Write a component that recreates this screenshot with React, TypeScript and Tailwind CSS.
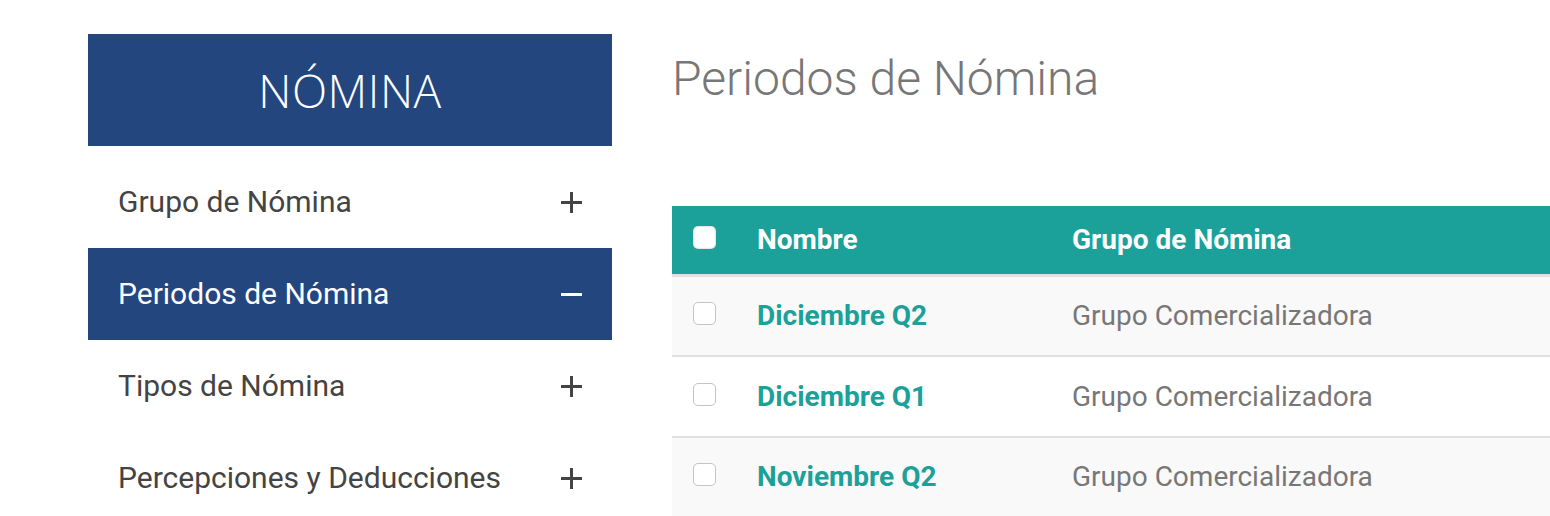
import React from "react";

const menu = [
  { label: "Grupo de Nómina", active: false },
  { label: "Periodos de Nómina", active: true },
  { label: "Tipos de Nómina", active: false },
  { label: "Percepciones y Deducciones", active: false },
];

const rows = [
  { name: "Diciembre Q2", group: "Grupo Comercializadora", h: "h-[80px]" },
  { name: "Diciembre Q1", group: "Grupo Comercializadora", h: "h-[81px]" },
  { name: "Noviembre Q2", group: "Grupo Comercializadora", h: "h-[80px]" },
];

function Toggle({ open }: { open: boolean }) {
  return (
    <span className="relative w-[21px] h-[21px] flex items-center justify-center">
      <span className={`absolute w-[21px] h-[3px] ${open ? "bg-white" : "bg-[#444]"}`} />
      {!open && <span className="absolute w-[3px] h-[21px] bg-[#444]" />}
    </span>
  );
}

export default function App() {
  return (
    <div className="w-[1550px] h-[516px] overflow-hidden bg-white flex pl-[88px] pt-[34px] font-['Roboto',sans-serif]">
      {/* sidebar */}
      <aside className="w-[524px] shrink-0">
        <div className="h-[112px] bg-[#23467f] flex items-center justify-center text-white text-[46px] font-light font-['Open_Sans',sans-serif] tracking-[0.5px]">
          NÓMINA
        </div>
        <ul className="mt-[10px]">
          {menu.map((m) => (
            <li
              key={m.label}
              className={`h-[92px] flex items-center justify-between pl-[30px] pr-[30px] text-[30px] ${
                m.active ? "bg-[#23467f] text-white" : "text-[#444]"
              }`}
            >
              <span className="-mt-[1px]">{m.label}</span>
              <Toggle open={m.active} />
            </li>
          ))}
        </ul>
      </aside>

      {/* main */}
      <main className="ml-[60px] flex-1 min-w-0">
        <h1 className="mt-[21px] text-[48px] leading-none font-light text-[#777]">Periodos de Nómina</h1>

        <div className="mt-[103px]">
          <div className="h-[68px] bg-[#1ba19a] border-b-[3px] border-[#e0e0e0] box-content grid grid-cols-[85px_315px_1fr] items-center text-white text-[28px] font-bold">
            <div className="pl-[21px] flex -mt-[5px]">
              <span className="w-[23px] h-[23px] rounded-[5px] bg-white shadow-[inset_0_0_2px_rgba(0,0,0,0.35)]" />
            </div>
            <div>Nombre</div>
            <div>Grupo de Nómina</div>
          </div>
          {rows.map((r, i) => (
            <div
              key={r.name}
              className={`${r.h} grid grid-cols-[85px_315px_1fr] items-center border-b-2 border-[#e0e0e0] text-[28px] ${
                i % 2 === 0 ? "bg-[#f9f9f9]" : "bg-white"
              }`}
            >
              <div className="pl-[21px] flex -mt-[5px]">
                <span className="w-[23px] h-[23px] rounded-[5px] bg-white border border-[#c4c4c4]" />
              </div>
              <div className="font-bold text-[#1ba19a]">{r.name}</div>
              <div className="text-[#777]">{r.group}</div>
            </div>
          ))}
        </div>
      </main>
    </div>
  );
}
